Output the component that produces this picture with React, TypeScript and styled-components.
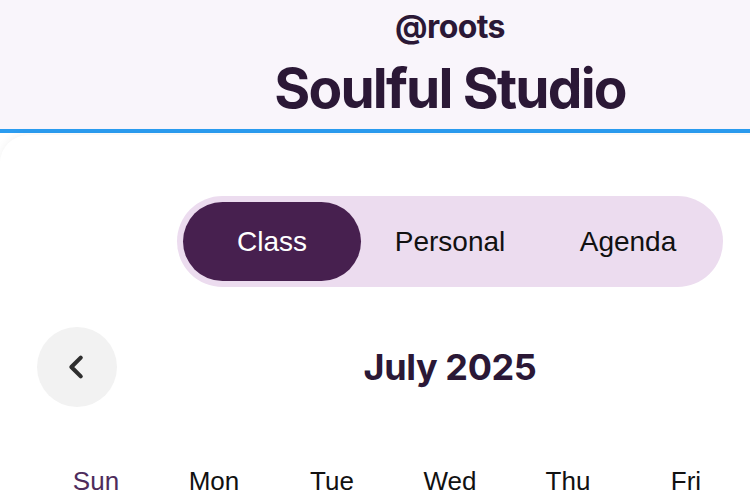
import React, { useState } from 'react';
import styled, { createGlobalStyle, css } from 'styled-components';

const GlobalStyle = createGlobalStyle`
  html, body {
    margin: 0;
    padding: 0;
    background: #ffffff;
    overflow: hidden;
  }
  body {
    font-family: Inter, "Liberation Sans", sans-serif;
  }
`;

const tabs = ['Class', 'Personal', 'Agenda'];
const days = ['Sun', 'Mon', 'Tue', 'Wed', 'Thu', 'Fri', 'Sat'];

const ChevronLeft = () => (
  <svg width="30" height="30" viewBox="0 0 24 24" fill="none">
    <path d="M15 4.5l-7.5 7.5 7.5 7.5" stroke="#2e2e2e" strokeWidth="3.3" strokeLinecap="round" strokeLinejoin="round" />
  </svg>
);

const ChevronRight = () => (
  <svg width="30" height="30" viewBox="0 0 24 24" fill="none">
    <path d="M9 4.5l7.5 7.5-7.5 7.5" stroke="#2e2e2e" strokeWidth="3.3" strokeLinecap="round" strokeLinejoin="round" />
  </svg>
);

const App = () => {
  const [active, setActive] = useState('Class');

  return (
    <Page>
      <GlobalStyle />
      <Header>
        <Handle>@roots</Handle>
        <Title>Soulful Studio</Title>
      </Header>
      <Card>
        <TabsRow>
          <Tabs>
            {tabs.map((t) => (
              <Tab key={t} active={active === t} onClick={() => setActive(t)}>
                {t}
              </Tab>
            ))}
          </Tabs>
        </TabsRow>
        <MonthRow>
          <NavButton aria-label="Previous month">
            <ChevronLeft />
          </NavButton>
          <Month>July 2025</Month>
          <NavButton aria-label="Next month">
            <ChevronRight />
          </NavButton>
        </MonthRow>
        <DaysRow>
          {days.map((d, i) => (
            <Day key={d} weekend={i === 0}>
              {d}
            </Day>
          ))}
        </DaysRow>
      </Card>
    </Page>
  );
};

export default App;

const Page = styled.div`
  width: 900px;
  min-height: 500px;
  background: #ffffff;
`;

const Header = styled.header`
  height: 133px;
  box-sizing: border-box;
  background: #f9f5fb;
  border-bottom: 4px solid #2b9cf0;
  display: flex;
  flex-direction: column;
  align-items: center;
  padding-top: 7px;
  color: #2b1836;
`;

const Handle = styled.div`
  font-size: 32px;
  font-weight: 700;
  line-height: 40px;
  letter-spacing: -0.6px;
`;

const Title = styled.h1`
  margin: 9px 0 0;
  font-size: 55px;
  font-weight: 700;
  line-height: 64px;
  letter-spacing: -1.8px;
`;

const Card = styled.main`
  background: #ffffff;
  border-radius: 28px 28px 0 0;
  box-shadow: 0 -1px 8px rgba(0, 0, 0, 0.05);
  margin-top: 2px;
  padding: 61px 37px 0;
  min-height: 370px;
`;

const TabsRow = styled.div`
  display: flex;
  justify-content: center;
`;

const Tabs = styled.div`
  display: flex;
  width: 546px;
  box-sizing: border-box;
  padding: 6px;
  border-radius: 46px;
  background: #ecdcef;
`;

const Tab = styled.button<{ active: boolean }>`
  flex: 1;
  height: 79px;
  border: none;
  border-radius: 40px;
  background: transparent;
  font-family: "Liberation Sans", Arial, sans-serif;
  font-size: 28px;
  color: #111111;
  cursor: pointer;
  ${(props) =>
    props.active &&
    css`
      background: #47204f;
      color: #ffffff;
    `}
`;

const MonthRow = styled.div`
  display: flex;
  align-items: center;
  justify-content: space-between;
  margin-top: 40px;
`;

const NavButton = styled.button`
  width: 80px;
  height: 80px;
  border: none;
  border-radius: 50%;
  background: #f2f2f2;
  display: flex;
  align-items: center;
  justify-content: center;
  padding: 0;
  cursor: pointer;
`;

const Month = styled.h2`
  margin: 0;
  font-size: 36px;
  font-weight: 700;
  color: #2b1836;
  letter-spacing: -0.4px;
`;

const DaysRow = styled.div`
  display: grid;
  grid-template-columns: repeat(7, 1fr);
  margin-top: 59px;
`;

const Day = styled.div<{ weekend: boolean }>`
  text-align: center;
  font-family: "Liberation Sans", Arial, sans-serif;
  font-size: 26px;
  line-height: 30px;
  color: ${(props) => (props.weekend ? '#4e2c5c' : '#111111')};
`;
